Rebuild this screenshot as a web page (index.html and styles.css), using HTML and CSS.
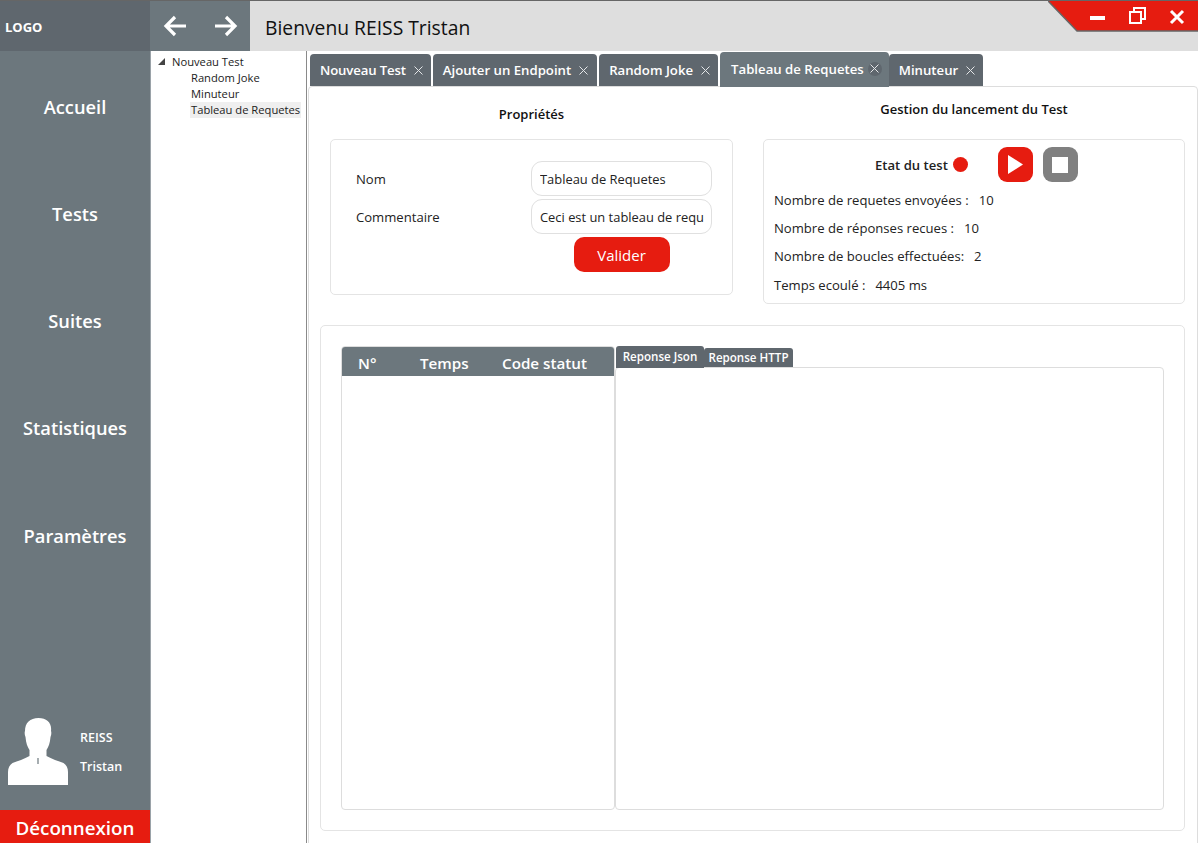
FILE: index.html
```html
<!DOCTYPE html>
<html lang="fr">
<head>
<meta charset="utf-8"/>
<title>Bienvenu REISS Tristan</title>
<link rel="stylesheet" href="styles.css">
</head>
<body>
<div class="window">

  <aside class="sidebar">
    <div class="logo">LOGO</div>
    <nav class="menu">
      <a class="menu-item">Accueil</a>
      <a class="menu-item">Tests</a>
      <a class="menu-item">Suites</a>
      <a class="menu-item">Statistiques</a>
      <a class="menu-item">Paramètres</a>
    </nav>
    <div class="user">
      <svg class="avatar" width="60" height="67" viewBox="0 0 60 67">
        <path fill="#fff" d="M30.5 0C22 0 17 5 17 13c-.5 1-.5 4 .5 6 .5 6 2 10 4 13v6c-5 3-12 5-17 7-3 2-4.500 5-4.500 9V67h60V54c0-4-1.500-7-4.500-9-5-2-12-4-17-7v-6c2-3 3.500-7 4-13 1-2 1-5 .5-6C44 5 39 0 30.500 0z"/>
        <path stroke="#6c777d" stroke-width="1.200" fill="none" d="M30 40v6"/>
      </svg>
      <div class="user-name">
        <span>REISS</span>
        <span>Tristan</span>
      </div>
    </div>
    <div class="logout">Déconnexion</div>
  </aside>

  <div class="right">
    <header class="topbar">
      <div class="arrows">
        <svg width="24" height="22" viewBox="0 0 24 22"><path d="M23 11H3M12 2l-9 9 9 9" fill="none" stroke="#fff" stroke-width="3.200"/></svg>
        <svg width="24" height="22" viewBox="0 0 24 22"><path d="M1 11h20M12 2l9 9-9 9" fill="none" stroke="#fff" stroke-width="3.200"/></svg>
      </div>
      <div class="title">Bienvenu REISS Tristan</div>
      <div class="controls">
        <svg width="150" height="31" viewBox="0 0 150 31">
          <path d="M0 0H150V30H29z" fill="#e61c10"/>
          <path d="M0 0L29 30H150" fill="none" stroke="#666" stroke-width="1.500"/>
          <path d="M42 17h15" stroke="#fff" stroke-width="4"/>
          <path d="M82 11h11v11H82zM86 11V7h11v11h-4" fill="none" stroke="#fff" stroke-width="2"/>
          <path d="M123 10l12 12M135 10l-12 12" stroke="#fff" stroke-width="3"/>
        </svg>
      </div>
    </header>

    <div class="body">
      <div class="tree">
        <div class="tree-root"><span class="tree-arrow"></span>Nouveau Test</div>
        <div class="tree-leaf">Random Joke</div>
        <div class="tree-leaf">Minuteur</div>
        <div class="tree-leaf selected">Tableau de Requetes</div>
      </div>

      <main class="main">
        <div class="tabs">
          <div class="tab">Nouveau Test <svg class="x" width="9" height="9" viewBox="0 0 9 9"><path d="M.5.5l8 8M8.500.5l-8 8"/></svg></div>
          <div class="tab">Ajouter un Endpoint <svg class="x" width="9" height="9" viewBox="0 0 9 9"><path d="M.5.5l8 8M8.500.5l-8 8"/></svg></div>
          <div class="tab">Random Joke <svg class="x" width="9" height="9" viewBox="0 0 9 9"><path d="M.5.5l8 8M8.500.5l-8 8"/></svg></div>
          <div class="tab active">Tableau de Requetes <span class="x-round"><svg class="x" width="9" height="9" viewBox="0 0 9 9"><path d="M.5.5l8 8M8.500.5l-8 8"/></svg></span></div>
          <div class="tab">Minuteur <svg class="x" width="9" height="9" viewBox="0 0 9 9"><path d="M.5.5l8 8M8.500.5l-8 8"/></svg></div>
        </div>

        <div class="panel">
          <div class="top-row">
            <section class="col-left">
              <h3 class="head head-left">Propriétés</h3>
              <div class="card form">
                <label>Nom</label>
                <input type="text" value="Tableau de Requetes">
                <label>Commentaire</label>
                <input type="text" value="Ceci est un tableau de requetes">
                <button class="btn-valider">Valider</button>
              </div>
            </section>
            <section class="col-right">
              <h3 class="head head-right">Gestion du lancement du Test</h3>
              <div class="card run">
                <div class="run-state">
                  <b>Etat du test</b>
                  <span class="dot"></span>
                  <span class="btn-icon red"><svg width="15" height="19" viewBox="0 0 15 19"><path d="M0 0l15 9.500L0 19z" fill="#fff"/></svg></span>
                  <span class="btn-icon grey"><span class="stop"></span></span>
                </div>
                <p><span>Nombre de requetes envoyées :</span><span>10</span></p>
                <p><span>Nombre de réponses recues :</span><span>10</span></p>
                <p><span>Nombre de boucles effectuées:</span><span>2</span></p>
                <p><span>Temps ecoulé :</span><span>4405 ms</span></p>
              </div>
            </section>
          </div>

          <div class="card results">
            <div class="table">
              <div class="table-head">
                <span class="c1">N°</span>
                <span class="c2">Temps</span>
                <span class="c3">Code statut</span>
              </div>
            </div>
            <div class="response">
              <div class="sub-tabs">
                <div class="sub-tab on">Reponse Json</div>
                <div class="sub-tab">Reponse HTTP</div>
              </div>
              <div class="sub-body"></div>
            </div>
          </div>
        </div>
      </main>
    </div>
  </div>
</div>
</body>
</html>
```

FILE: styles.css
```css
html, body {
  margin: 0;
  height: 100%;
  overflow: hidden;
  background: white;
}

body {
  font-family: "Open Sans", "Noto Sans", sans-serif;
  font-size: 13.100px;
  color: #222;
}

.window {
  display: flex;
  height: 843px;
  border-top: 1px solid #666;
  box-sizing: border-box;
}

/* left menu */
.sidebar {
  width: 150px;
  flex: none;
  display: flex;
  flex-direction: column;
  background: #6c777d;
  color: white;
}

.logo {
  height: 50px;
  line-height: 52px;
  padding-left: 5px;
  background: #5f676e;
  font-weight: 700;
  font-size: 13px;
}

.menu {
  padding-top: 1.500px;
  flex: 1;
}

.menu-item {
  display: block;
  height: 107.300px;
  line-height: 107.300px;
  text-align: center;
  font-size: 18.300px;
  font-weight: 600;
}

.user {
  display: flex;
  height: 92px;
  padding-left: 8px;
}

.user-name {
  display: flex;
  flex-direction: column;
  gap: 11px;
  margin-left: 12px;
  padding-top: 11px;
  font-size: 12.500px;
  font-weight: 600;
  line-height: 18px;
}

.logout {
  height: 33px;
  line-height: 36px;
  background: #e61c10;
  text-align: center;
  font-size: 18.800px;
  font-weight: 600;
}

.right {
  flex: 1;
  min-width: 0;
  display: flex;
  flex-direction: column;
}

/* top bar */
.topbar {
  position: relative;
  display: flex;
  height: 50px;
  flex: none;
  background: #dedede;
}

.arrows {
  width: 100px;
  display: flex;
  justify-content: space-between;
  align-items: center;
  padding: 0 12px 0 13px;
  box-sizing: border-box;
  background: #6c777d;
}

.title {
  padding-left: 15px;
  line-height: 54px;
  font-size: 19.300px;
  font-weight: 500;
  color: #111;
}

.controls {
  position: absolute;
  top: 0;
  right: 0;
  height: 31px;
}

.body {
  flex: 1;
  display: flex;
  min-height: 0;
}

/* tree */
.tree {
  width: 157px;
  flex: none;
  box-sizing: border-box;
  border-left: 1px solid #9aa2a8;
  border-right: 1px solid #8a8a8a;
  padding-top: 3px;
  font-size: 11.200px;
  line-height: 16px;
  color: #222;
}

.tree-root {
  position: relative;
  padding-left: 21px;
}

.tree-arrow {
  position: absolute;
  left: 7px;
  top: 4px;
  border-style: solid;
  border-width: 0 0 7px 7px;
  border-color: transparent transparent #444 transparent;
}

.tree-leaf {
  margin-left: 39px;
  padding-left: 1px;
  white-space: nowrap;
}

.selected {
  background: #efefef;
  margin-right: 5px;
}

/* tabs */
.main {
  flex: 1;
  min-width: 0;
  overflow: hidden;
}

.tabs {
  display: flex;
  align-items: flex-end;
  gap: 2px;
  height: 35px;
  padding-left: 3px;
  position: relative;
  z-index: 1;
}

.tab {
  display: flex;
  align-items: center;
  justify-content: space-between;
  gap: 8px;
  height: 32px;
  padding: 0 8px 0 10px;
  box-sizing: border-box;
  background: #5f676e;
  border-radius: 4px 4px 0 0;
  color: white;
  font-size: 13.200px;
  font-weight: 600;
  white-space: nowrap;
}

.tab:first-child {
  letter-spacing: -0.150px;
}

.tab:nth-child(2) {
  padding-right: 9px;
}

.tab.active {
  height: 35px;
  margin: 0 -2px -1px 0;
  padding: 0 9px 2px 11px;
  background: #6c777d;
}

.x {
  fill: none;
  stroke: #e4e6e8;
  stroke-width: 1;
  flex: none;
  display: block;
}

.x-round {
  display: flex;
  align-items: center;
  justify-content: center;
  width: 14px;
  height: 14px;
  margin: 0 -2px 0 -4px;
  border-radius: 50%;
  background: #5f676e;
}

.panel {
  border: 1px solid #ddd;
  border-radius: 4px;
  margin: 0 0 0 1px;
  height: 780px;
  padding-left: 11px;
}

.top-row {
  display: flex;
  gap: 30px;
  margin-left: 10px;
}

.head {
  margin: 0;
  height: 52px;
  box-sizing: border-box;
  line-height: 18px;
  text-align: center;
  font-size: 13px;
  font-weight: 600;
  color: #111;
}

.head-left { padding-top: 18px; }
.head-right { padding-top: 13px; }

.card {
  border: 1px solid #e4e4e4;
  border-radius: 5px;
  box-sizing: border-box;
  background: white;
}

/* properties */
.col-left { width: 403px; }
.col-right { width: 422px; }

.form {
  display: grid;
  grid-template-columns: 175px 181px;
  grid-auto-rows: 35px;
  row-gap: 3px;
  align-items: center;
  height: 156px;
  padding: 21px 0 0 25px;
}

.form input {
  width: 181px;
  height: 35px;
  box-sizing: border-box;
  border: 1px solid #e0e0e0;
  border-radius: 11px;
  padding: 0 7px 0 8px;
  font: inherit;
  font-size: 12.900px;
  color: #222;
  outline: none;
}

.btn-valider {
  grid-column: 2;
  justify-self: center;
  width: 96px;
  height: 35px;
  border: none;
  border-radius: 10px;
  background: #e61c10;
  color: white;
  font-family: inherit;
  font-size: 15px;
}

/* run state */
.run {
  height: 165px;
  padding: 7px 0 0 10px;
}

.run-state {
  display: flex;
  align-items: center;
  height: 35px;
  padding-left: 101px;
  margin-bottom: 4px;
}

.run-state b { font-weight: 600; }

.dot {
  width: 15px;
  height: 15px;
  margin: 0 30px 0 5px;
  border-radius: 50%;
  background: #e61c10;
}

.btn-icon {
  display: flex;
  align-items: center;
  justify-content: center;
  width: 35px;
  height: 35px;
  margin-right: 10px;
  border-radius: 9px;
}

.red { background: #e61c10; }
.grey { background: #808080; }

.stop {
  width: 16px;
  height: 16px;
  background: white;
}

.run p {
  display: flex;
  gap: 10px;
  margin: 0;
  height: 28.200px;
  line-height: 28px;
}

/* results */
.results {
  display: flex;
  width: 865px;
  height: 506px;
  margin-top: 21px;
  padding: 20px 0 0 20px;
}

.table {
  width: 274px;
  height: 464px;
  box-sizing: border-box;
  border: 1px solid #ddd;
  border-radius: 4px;
}

.table-head {
  display: flex;
  height: 29px;
  line-height: 33px;
  background: #6c777d;
  border-radius: 3px 3px 0 0;
  color: white;
  font-size: 15.200px;
  font-weight: 600;
}

.c1 { margin-left: 16px; width: 62px; }
.c2 { width: 82px; }

.response {
  width: 549px;
}

.sub-tabs {
  display: flex;
  align-items: flex-start;
  height: 22px;
  margin-bottom: -1px;
  padding-left: 1px;
  position: relative;
  z-index: 1;
}

.sub-tab {
  height: 19px;
  margin-top: 2px;
  line-height: 19px;
  width: 89px;
  box-sizing: border-box;
  text-align: center;
  background: #5f676e;
  border-radius: 3px 3px 0 0;
  color: white;
  font-size: 11.600px;
  font-weight: 600;
}

.sub-tab.on {
  height: 22px;
  margin-top: 0;
  width: 88px;
  line-height: 21px;
}

.sub-body {
  height: 443px;
  box-sizing: border-box;
  border: 1px solid #ddd;
  border-radius: 4px;
}
```
